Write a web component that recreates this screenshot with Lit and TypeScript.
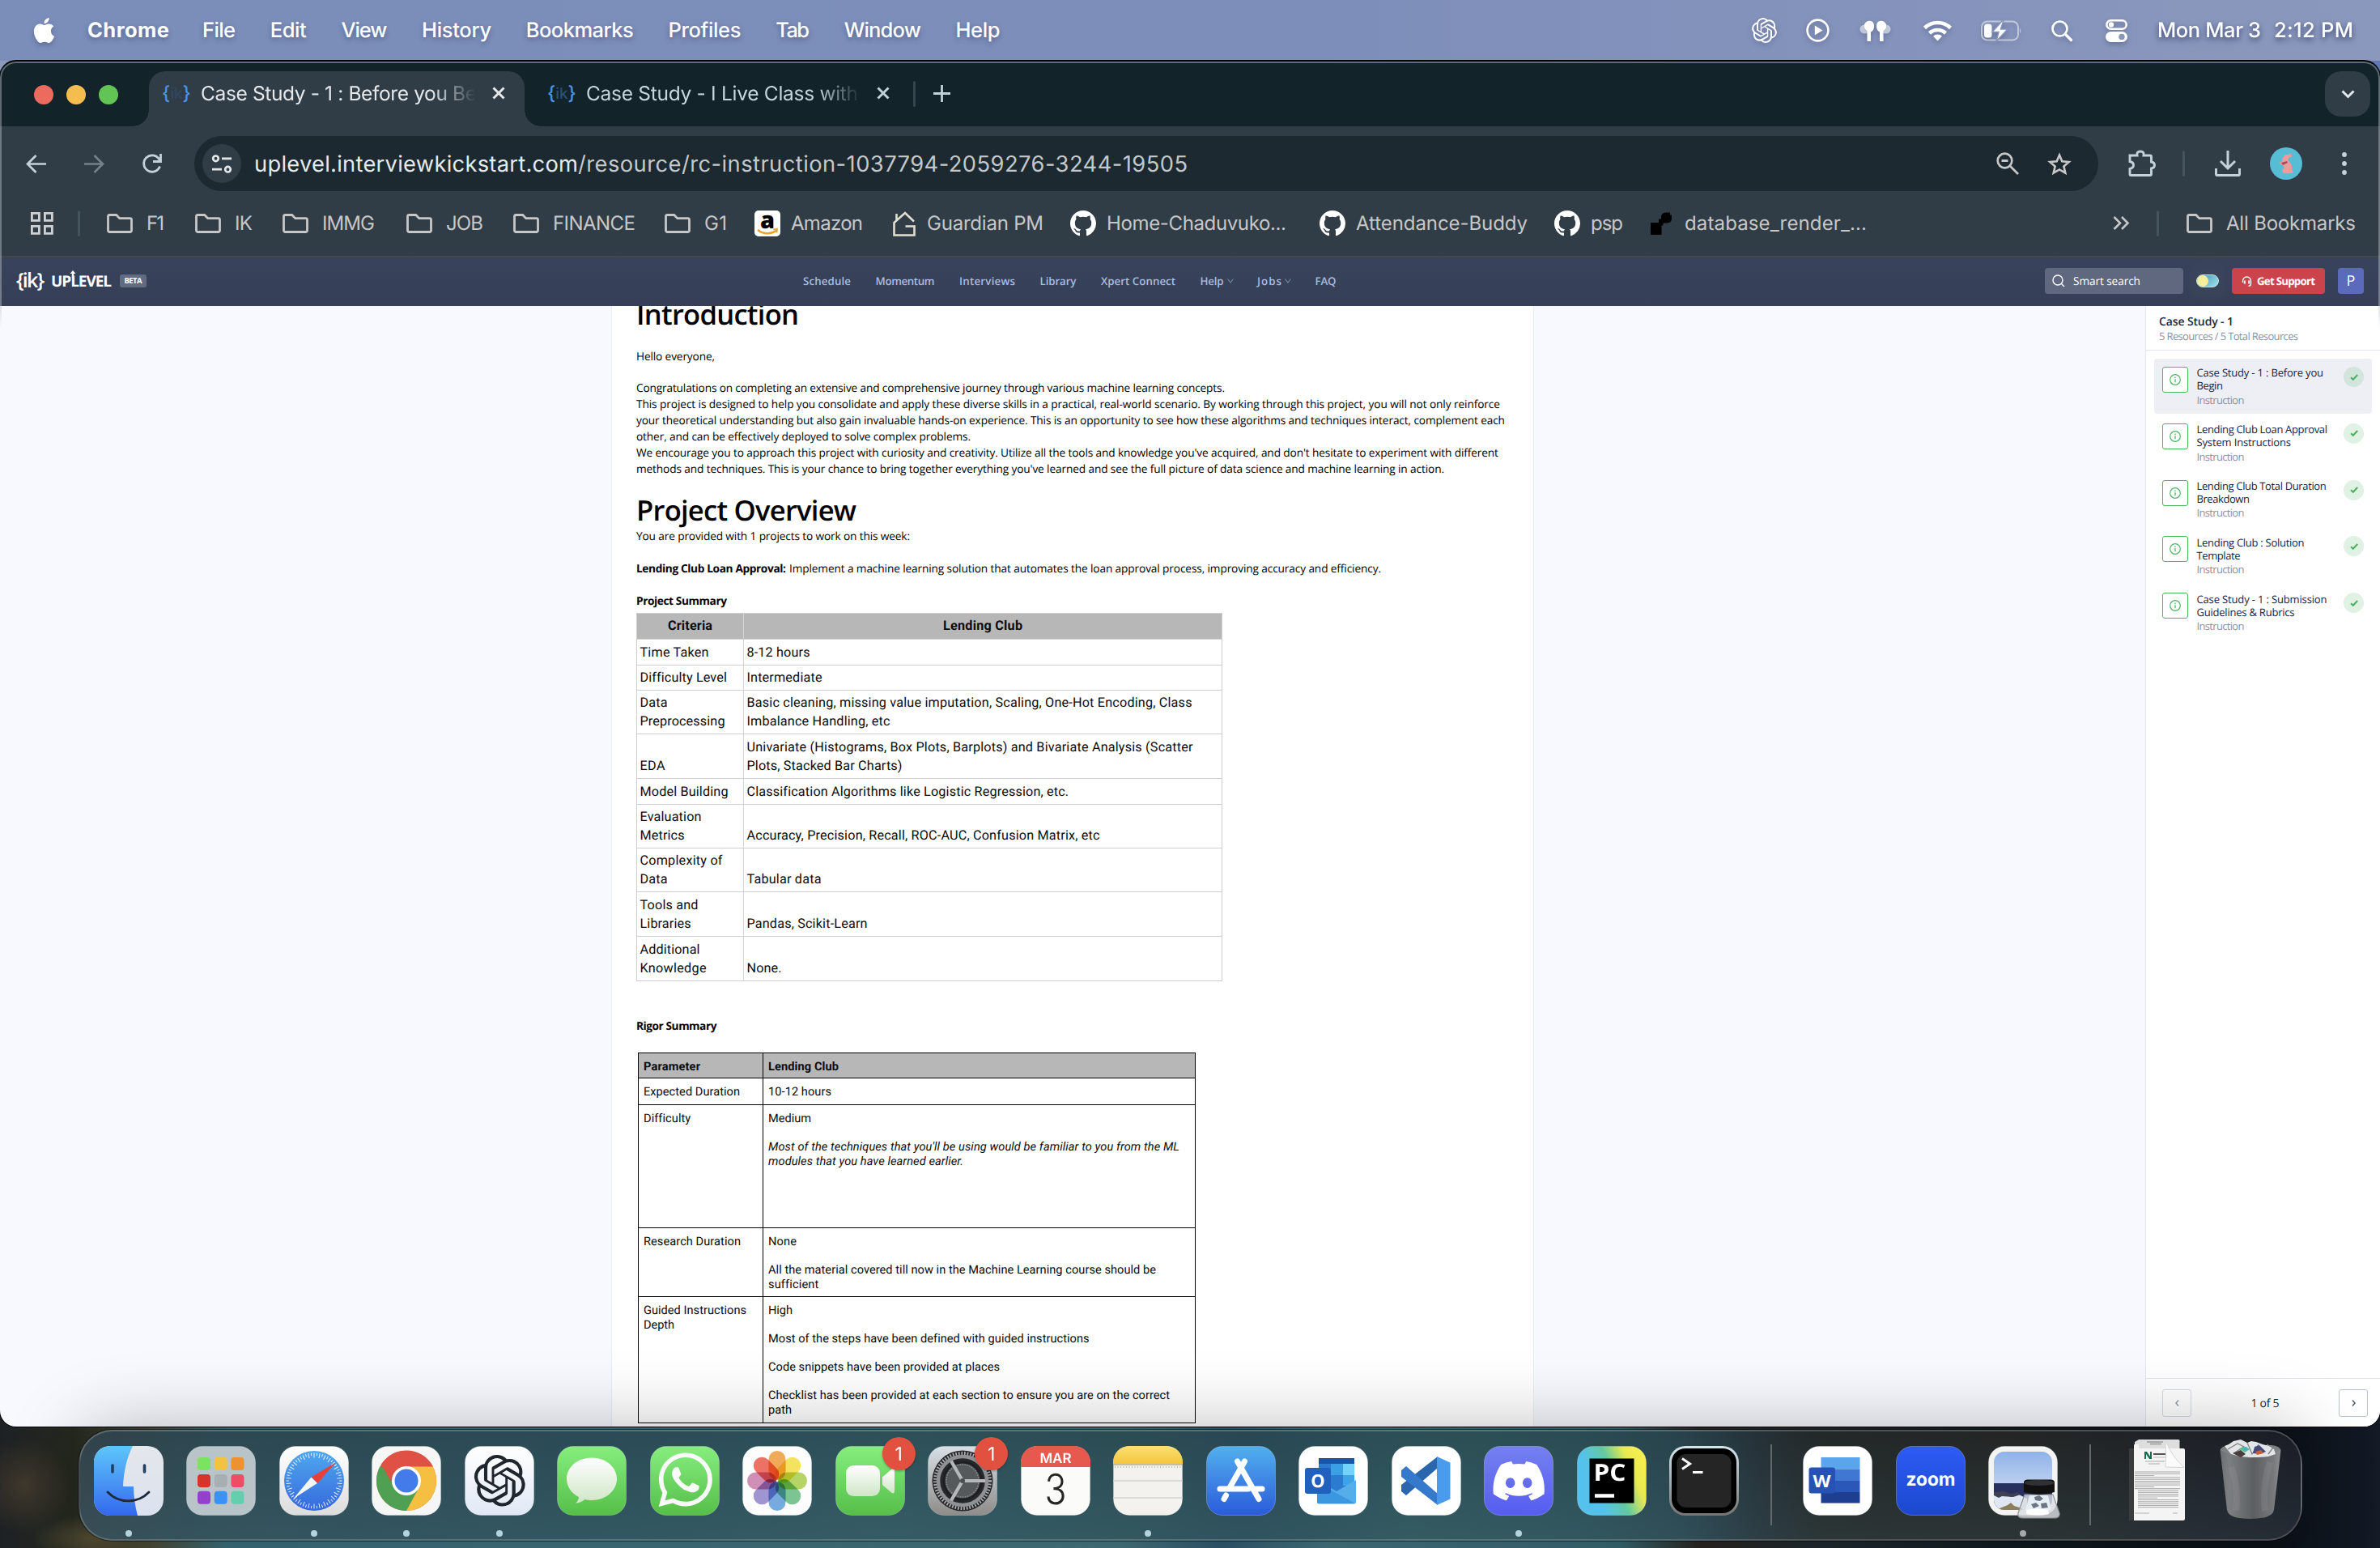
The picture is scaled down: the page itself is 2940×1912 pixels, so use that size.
import { LitElement, html, svg, css, TemplateResult, SVGTemplateResult } from "lit";
import { customElement, property } from "lit/decorators.js";

/** A single line of text whose tracking is adjusted to fill a given width. */
@customElement("fit-text")
class FitText extends LitElement {
  @property() text = "";
  @property({ type: Number }) w = 0;
  static styles = css`
    :host { display: block; white-space: pre; flex: none; }
    .line { display: inline-block; }
  `;
  firstUpdated() {
    const line = this.renderRoot.querySelector(".line") as HTMLElement;
    const natural = line.getBoundingClientRect().width;
    const gaps = Math.max(1, this.text.length - 1);
    line.style.letterSpacing = `${(this.w - natural) / gaps}px`;
    this.style.width = `${this.w}px`;
  }
  render() {
    return html`<span class="line">${this.text}</span>`;
  }
}

const t = (text: string, w: number, cls = "") => html`<fit-text class=${cls} .text=${text} .w=${w}></fit-text>`;
const icon = (w: number, h: number, body: SVGTemplateResult, vb = `0 0 ${w} ${h}`, cls = "") =>
  html`<svg class=${cls} width=${w} height=${h} viewBox=${vb}>${body}</svg>`;

const OPENAI = "M22.2819 9.8211a5.9847 5.9847 0 0 0-.5157-4.9108 6.0462 6.0462 0 0 0-6.5098-2.9A6.0651 6.0651 0 0 0 4.9807 4.1818a5.9847 5.9847 0 0 0-3.9977 2.9 6.0462 6.0462 0 0 0 .7427 7.0966 5.98 5.98 0 0 0 .511 4.9107 6.051 6.051 0 0 0 6.5146 2.9001A5.9847 5.9847 0 0 0 13.2599 24a6.0557 6.0557 0 0 0 5.7718-4.2058 5.9894 5.9894 0 0 0 3.9977-2.9001 6.0557 6.0557 0 0 0-.7475-7.0729zm-9.022 12.6081a4.4755 4.4755 0 0 1-2.8764-1.0408l.1419-.0804 4.7783-2.7582a.7948.7948 0 0 0 .3927-.6813v-6.7369l2.02 1.1686a.071.071 0 0 1 .038.052v5.5826a4.504 4.504 0 0 1-4.4945 4.4944zm-9.6607-4.1254a4.4708 4.4708 0 0 1-.5346-3.0137l.142.0852 4.783 2.7582a.7712.7712 0 0 0 .7806 0l5.8428-3.3685v2.3324a.0804.0804 0 0 1-.0332.0615L9.74 19.9502a4.4992 4.4992 0 0 1-6.1408-1.6464zM2.3408 7.8956a4.485 4.485 0 0 1 2.3655-1.9728V11.6a.7664.7664 0 0 0 .3879.6765l5.8144 3.3543-2.0201 1.1685a.0757.0757 0 0 1-.071 0l-4.8303-2.7865A4.504 4.504 0 0 1 2.3408 7.872zm16.5963 3.8558L13.1038 8.364 15.1192 7.2a.0757.0757 0 0 1 .071 0l4.8303 2.7913a4.4944 4.4944 0 0 1-.6765 8.1042v-5.6772a.79.79 0 0 0-.407-.667zm2.0107-3.0231l-.142-.0852-4.7735-2.7818a.7759.7759 0 0 0-.7854 0L9.409 9.2297V6.8974a.0662.0662 0 0 1 .0284-.0615l4.8303-2.7866a4.4992 4.4992 0 0 1 6.6802 4.66zM8.3065 12.863l-2.02-1.1638a.0804.0804 0 0 1-.038-.0567V6.0742a4.4992 4.4992 0 0 1 7.3757-3.4537l-.142.0805L8.704 5.459a.7948.7948 0 0 0-.3927.6813zm1.0976-2.3654l2.602-1.4998 2.6069 1.4998v2.9994l-2.5974 1.4997-2.6067-1.4997Z";
const APPLE = "M12.152 6.896c-.948 0-2.415-1.078-3.96-1.04-2.04.027-3.91 1.183-4.961 3.014-2.117 3.675-.546 9.103 1.519 12.09 1.013 1.454 2.208 3.09 3.792 3.039 1.52-.065 2.09-.987 3.935-.987 1.831 0 2.35.987 3.96.948 1.637-.026 2.676-1.48 3.676-2.948 1.156-1.688 1.636-3.325 1.662-3.415-.039-.013-3.182-1.221-3.22-4.857-.026-3.04 2.48-4.494 2.597-4.559-1.429-2.09-3.623-2.324-4.39-2.376-2-.156-3.675 1.09-4.61 1.09zM15.53 3.83c.843-1.012 1.4-2.427 1.245-3.83-1.207.052-2.662.805-3.532 1.818-.78.896-1.454 2.338-1.273 3.714 1.338.104 2.715-.688 3.559-1.701";
const DISCORD = "M20.317 4.3698a19.7913 19.7913 0 00-4.8851-1.5152.0741.0741 0 00-.0785.0371c-.211.3753-.4447.8648-.6083 1.2495-1.8447-.2762-3.68-.2762-5.4868 0-.1636-.3933-.4058-.8742-.6177-1.2495a.077.077 0 00-.0785-.037 19.7363 19.7363 0 00-4.8852 1.515.0699.0699 0 00-.0321.0277C.5334 9.0458-.319 13.5799.0992 18.0578a.0824.0824 0 00.0312.0561c2.0528 1.5076 4.0413 2.4228 5.9929 3.0294a.0777.0777 0 00.0842-.0276c.4616-.6304.8731-1.2952 1.226-1.9942a.076.076 0 00-.0416-.1057c-.6528-.2476-1.2743-.5495-1.8722-.8923a.077.077 0 01-.0076-.1277c.1258-.0943.2517-.1923.3718-.2914a.0743.0743 0 01.0776-.0105c3.9278 1.7933 8.18 1.7933 12.0614 0a.0739.0739 0 01.0785.0095c.1202.099.246.1981.3728.2924a.077.077 0 01-.0066.1276 12.2986 12.2986 0 01-1.873.8914.0766.0766 0 00-.0407.1067c.3604.698.7719 1.3628 1.225 1.9932a.076.076 0 00.0842.0286c1.961-.6067 3.9495-1.5219 6.0023-3.0294a.077.077 0 00.0313-.0552c.5004-5.177-.8382-9.6739-3.5485-13.6604a.061.061 0 00-.0312-.0286zM8.02 15.3312c-1.1825 0-2.1569-1.0857-2.1569-2.419 0-1.3332.9555-2.4189 2.157-2.4189 1.2108 0 2.1757 1.0952 2.1568 2.419 0 1.3332-.9555 2.4189-2.1569 2.4189zm7.9748 0c-1.1825 0-2.1569-1.0857-2.1569-2.419 0-1.3332.9554-2.4189 2.1569-2.4189 1.2108 0 2.1757 1.0952 2.1568 2.419 0 1.3332-.946 2.4189-2.1568 2.4189Z";
const WHATSAPP = "M17.472 14.382c-.297-.149-1.758-.867-2.03-.967-.273-.099-.471-.148-.67.15-.197.297-.767.966-.94 1.164-.173.199-.347.223-.644.075-.297-.15-1.255-.463-2.39-1.475-.883-.788-1.48-1.761-1.653-2.059-.173-.297-.018-.458.13-.606.134-.133.298-.347.446-.52.149-.174.198-.298.298-.497.099-.198.05-.371-.025-.52-.075-.149-.669-1.612-.916-2.207-.242-.579-.487-.5-.669-.51-.173-.008-.371-.01-.57-.01-.198 0-.52.074-.792.372-.272.297-1.04 1.016-1.04 2.479 0 1.462 1.065 2.875 1.213 3.074.149.198 2.096 3.2 5.077 4.487.709.306 1.262.489 1.694.625.712.227 1.36.195 1.871.118.571-.085 1.758-.719 2.006-1.413.248-.694.248-1.289.173-1.413-.074-.124-.272-.198-.57-.347m-5.421 7.403h-.004a9.87 9.87 0 01-5.031-1.378l-.361-.214-3.741.982.998-3.648-.235-.374a9.86 9.86 0 01-1.51-5.26c.001-5.45 4.436-9.884 9.888-9.884 2.64 0 5.122 1.03 6.988 2.898a9.825 9.825 0 012.893 6.994c-.003 5.45-4.437 9.884-9.885 9.884m8.413-18.297A11.815 11.815 0 0012.05 0C5.495 0 .16 5.335.157 11.892c0 2.096.547 4.142 1.588 5.945L.057 24l6.305-1.654a11.882 11.882 0 005.683 1.448h.005c6.554 0 11.89-5.335 11.893-11.893a11.821 11.821 0 00-3.48-8.413z";
const GITHUB = "M8 0C3.58 0 0 3.58 0 8c0 3.54 2.29 6.53 5.47 7.59.4.07.55-.17.55-.38 0-.19-.01-.82-.01-1.49-2.01.37-2.53-.49-2.69-.94-.09-.23-.48-.94-.82-1.13-.28-.15-.68-.52-.01-.53.63-.01 1.08.58 1.23.82.72 1.21 1.87.87 2.33.66.07-.52.28-.87.51-1.07-1.78-.2-3.64-.89-3.64-3.95 0-.87.31-1.59.82-2.15-.08-.2-.36-1.02.08-2.12 0 0 .67-.21 2.2.82.64-.18 1.32-.27 2-.27s1.36.09 2 .27c1.53-1.04 2.2-.82 2.2-.82.44 1.1.16 1.92.08 2.12.51.56.82 1.27.82 2.15 0 3.07-1.87 3.75-3.65 3.95.29.25.54.73.54 1.48 0 1.07-.01 1.93-.01 2.2 0 .21.15.46.55.38A8.01 8.01 0 0 0 16 8c0-4.42-3.58-8-8-8z";

/* ---------- small icons ---------- */
const folder = icon(32, 24, svg`<path d="M1.5 3.2a1.8 1.8 0 0 1 1.8-1.7h8.4l4 4.2h13a1.8 1.8 0 0 1 1.8 1.8v13.2a1.8 1.8 0 0 1-1.8 1.8H3.300a1.8 1.8 0 0 1-1.8-1.800z" fill="none" stroke="#c7c7c7" stroke-width="2.8"/>`);
const github = icon(32, 32, svg`<path d=${GITHUB} fill="#fff"/>`, "0 0 16 16");
const amazon = icon(32, 32, svg`<rect width="32" height="32" rx="5" fill="#fff"/><text x="16" y="22" text-anchor="middle" font-family="Open Sans" font-weight="800" font-size="29" fill="#000">a</text><path d="M4 24c7 5.500 17 5.500 23 .6" fill="none" stroke="#f29f33" stroke-width="2.600"/><path d="M23.500 23.300l4.500-.6-.6 4.600" fill="none" stroke="#f29f33" stroke-width="1.800"/>`);
const guardian = icon(30, 32, svg`<path d="M27 13.500L16 3 2.500 15v15.500h25V19.500H16.500M5.500 12V4" fill="none" stroke="#e3dfcf" stroke-width="2.600"/>`);
const render = icon(32, 30, svg`<path d="M3 14h10v-4.500h3V6q1-4 5-4.500h6v3h2V10q-1 4-5 4.500h-5.500v3H16.500V29H3z" fill="#000"/>`);
const closeX = (c: string) => icon(16, 16, svg`<path d="M1.500 1.500l13 13M14.500 1.500l-13 13" stroke=${c} stroke-width="3" fill="none"/>`);

const menus: [string, number][] = [["File", 41], ["Edit", 45], ["View", 57], ["History", 86], ["Bookmarks", 133], ["Profiles", 90], ["Tab", 42], ["Window", 95], ["Help", 55]];

const bookmarks: [TemplateResult, string, number][] = [
  [folder, "F1", 22], [folder, "IK", 22], [folder, "IMMG", 65], [folder, "JOB", 46], [folder, "FINANCE", 102], [folder, "G1", 28],
  [amazon, "Amazon", 89], [guardian, "Guardian PM", 144], [github, "Home-Chaduvuko...", 222], [github, "Attendance-Buddy", 212], [github, "psp", 40], [render, "database_render_...", 225],
];

const navLinks: [string, number, boolean][] = [["Schedule", 59, false], ["Momentum", 73, false], ["Interviews", 69, false], ["Library", 45, false], ["Xpert Connect", 92, false], ["Help", 29, true], ["Jobs", 30, true], ["FAQ", 26, false]];

type Line = [string, number];
const project: [number, Line[], Line[]][] = [
  [33, [["Criteria", 55]], [["Lending Club", 98]]],
  [32, [["Time Taken", 85]], [["8-12 hours", 78]]],
  [31, [["Difficulty Level", 106]], [["Intermediate", 93]]],
  [54.5, [["Data", 34], ["Preprocessing", 105]], [["Basic cleaning, missing value imputation, Scaling, One-Hot Encoding, Class", 550], ["Imbalance Handling, etc", 177]]],
  [54.8, [["EDA", 31]], [["Univariate (Histograms, Box Plots, Barplots) and Bivariate Analysis (Scatter", 551], ["Plots, Stacked Bar Charts)", 192]]],
  [32.2, [["Model Building", 109]], [["Classification Algorithms like Logistic Regression, etc.", 397]]],
  [53.8, [["Evaluation", 76], ["Metrics", 55]], [["Accuracy, Precision, Recall, ROC-AUC, Confusion Matrix, etc", 436]]],
  [54.6, [["Complexity of", 102], ["Data", 34]], [["Tabular data", 92]]],
  [54.6, [["Tools and", 72], ["Libraries", 63]], [["Pandas, Scikit-Learn", 149]]],
  [55, [["Additional", 74], ["Knowledge", 82]], [["None.", 43]]],
];
const rigor: [number, Line[], Line[][], string][] = [
  [32, [["Parameter", 70]], [[["Lending Club", 87]]], "head"],
  [33, [["Expected Duration", 119]], [[["10-12 hours", 78]]], ""],
  [152, [["Difficulty", 57]], [[["Medium", 53]], [["Most of the techniques that you'll be using would be familiar to you from the ML", 508], ["modules that you have learned earlier.", 241]]], "ital"],
  [85.3, [["Research Duration", 120]], [[["None", 35]], [["All the material covered till now in the Machine Learning course should be", 479], ["sufficient", 61]]], ""],
  [156, [["Guided Instructions", 127], ["Depth", 38]], [[["High", 30]], [["Most of the steps have been defined with guided instructions", 396]], [["Code snippets have been provided at places", 286]], [["Checklist has been provided at each section to ensure you are on the correct", 496], ["path", 29]]], ""],
];
const resources: [Line, Line][] = [
  [["Case Study - 1 : Before you", 156.500], ["Begin", 32.500]],
  [["Lending Club Loan Approval", 161.500], ["System Instructions", 116.500]],
  [["Lending Club Total Duration", 160.300], ["Breakdown", 65.500]],
  [["Lending Club : Solution", 133], ["Template", 54]],
  [["Case Study - 1 : Submission", 161], ["Guidelines & Rubrics", 121]],
];

/* ---------- dock icons, drawn on an 86-unit tile ---------- */
const bg = (fill: string) => svg`<rect x=".5" y=".5" width="85" height="85" rx="19.500" fill=${fill} stroke="#fff" stroke-opacity=".25"/>`;
const range = (n: number) => Array.from({ length: n }, (_, i) => i);

const finder = svg`<clipPath id="fc"><rect width="86" height="86" rx="20"/></clipPath><g clip-path="url(#fc)"><rect width="86" height="86" fill="url(#gFinR)"/><path d="M0 0H48C40 16 37 32 36 49q0 1 1 1H49C49 62 51 75 54 86H0z" fill="url(#gFinL)"/></g>
<path d="M23 24v8M62.500 24v8" stroke="#24405f" stroke-width="3.600" stroke-linecap="round"/><path d="M17 57c14 14.500 37 14.500 51 0" fill="none" stroke="#1d2a3c" stroke-width="2.800" stroke-linecap="round"/>`;
const padColors = ["#7be35f", "#f3c243", "#ee9131", "#d5342b", "#a8afb3", "#ee4d66", "#9440cf", "#3a92f5", "#62cfae"];
const launchpad = svg`${bg("#b9c4c8")}${padColors.map((c, i) => svg`<rect x=${14 + (i % 3) * 20.7} y=${14 + Math.floor(i / 3) * 20.9} width="16" height="16" rx="4" fill=${c}/>`)}`;
const safari = svg`${bg("url(#gWhite)")}<circle cx="43" cy="43" r="37" fill="url(#gSaf)"/>${range(60).map((i) => svg`<path d=${i % 2 ? "M43 8.500v3.500" : "M43 8.500v6"} stroke="#fff" stroke-opacity=".85" stroke-width="1" transform="rotate(${i * 6} 43 43)"/>`)}
<path d="M69.500 20.500L39.500 38.500 47 46z" fill="#ea3f36"/><path d="M17.500 65L39.500 38.500 47 46z" fill="#f4f5f7"/>`;
const chrome = svg`${bg("#f6f6f6")}<circle cx="43" cy="43" r="37" fill="#de5144"/><path d="M43 43L10.950 24.500A37 37 0 0 0 43 80z" fill="#4fa053"/><path d="M43 80A37 37 0 0 0 75.040 24.500H43V43z" fill="#f5bf41"/><path d="M27.800 51.800L10.950 24.500 43 25.500z" fill="#de5144"/><path d="M43 80L58.500 51.500 43 45 28 52 27 51.500 43 80z" fill="#4fa053"/><path d="M11 24.500L28 52l5-10z" fill="#4fa053"/><path d="M12 22.500L27.500 50 43 30V25.500H76A37 37 0 0 0 12 22.500z" fill="#de5144"/><circle cx="43" cy="43" r="18" fill="#fff"/><circle cx="43" cy="43" r="14.500" fill="#447bea"/>`;
const chatgpt = svg`${bg("url(#gGpt)")}<path d=${OPENAI} fill="#1f262d" transform="translate(11.500 11) scale(2.650)"/>`;
const messages = svg`${bg("url(#gGreen)")}<path d="M43 14.500c17.500 0 31 11.500 31 26s-13.500 26.500-31 26.500c-3 0-6-.3-8.500-1-3 2.700-7 4.500-11.500 4.500 2.500-2 4-4.700 4-7.500C18 58.500 12 50 12 40.500c0-14.500 13.500-26 31-26z" fill="url(#gBub)"/>`;
const whatsapp = svg`${bg("url(#gGreen)")}<path d=${WHATSAPP} fill="#fafafa" transform="translate(10.500 8.500) scale(2.770)"/>`;
const petals = ["#f09a37", "#f4df3c", "#a9cd45", "#62b97c", "#5a9bdb", "#8d7fc9", "#c877a8", "#ea5445"];
const photos = svg`${bg("#fdfdfd")}${petals.map((c, i) => svg`<rect x="32.500" y="6" width="21" height="36" rx="10.500" fill=${c} fill-opacity=".82" class="petal" transform="rotate(${i * 45} 43 43)"/>`)}`;
const facetime = svg`${bg("url(#gGreen)")}<rect x="13" y="24" width="42" height="38" rx="9.500" fill="url(#gBub)"/><path d="M58 38.500L69 29q4-3 4 1.500V56q0 4-4 1.500L58 48z" fill="url(#gBub)"/>`;
const settings = svg`${bg("url(#gSet)")}<circle cx="43" cy="43" r="37.500" fill="#26282a"/><circle cx="43" cy="43" r="34" fill="none" stroke="#a9adaf" stroke-width="4" stroke-dasharray="1.700 1.900"/><circle cx="43" cy="43" r="30" fill="none" stroke="#8e9294" stroke-width="4.500"/><circle cx="43" cy="43" r="23" fill="#55595b" stroke="#1d1f20" stroke-width="3"/><circle cx="43" cy="43" r="20" fill="none" stroke="#888c8e" stroke-width="1.500" stroke-dasharray="1.500 1.500"/><path d="M43 43H71M43 43L29 18.800M43 43L29 67.200" stroke="#b4b8ba" stroke-width="4.200"/><circle cx="43" cy="43" r="3" fill="#4a4e50"/>`;
const calendar = svg`${bg("#fbfbf9")}<path d="M0 26V20A20 20 0 0 1 20 0H66A20 20 0 0 1 86 20V26z" fill="#e5594f"/><text x="43" y="20.500" text-anchor="middle" font-family="Inter" font-weight="600" font-size="17" fill="#fff">MAR</text><text x="43" y="72" text-anchor="middle" font-family="Inter" font-weight="300" font-size="52" fill="#262626" textLength="27" lengthAdjust="spacingAndGlyphs">3</text>`;
const notes = svg`${bg("#f4f2ee")}<path d="M0 22V20A20 20 0 0 1 20 0H66A20 20 0 0 1 86 20V22z" fill="url(#gNote)"/><path d="M0 23H86" stroke="#b9ac86" stroke-width="1.500"/><path d="M2 26H85" stroke="#c4c1bb" stroke-width="2" stroke-dasharray="1 2.500"/><path d="M0 43H86M0 64H86" stroke="#d5d3d0" stroke-width="1.400"/>`;
const appstore = svg`${bg("url(#gApp)")}<g stroke="#fff" stroke-width="7" stroke-linecap="round"><path d="M47.500 19L29 51.500M38.500 19L65 65.500M17 53H52M61 53H69M24.500 61L22 65.500"/></g>`;
const outlook = svg`${bg("#fff")}<rect x="25" y="15" width="44" height="56" rx="2.500" fill="#2b7cd0"/><rect x="25" y="15" width="44" height="7" fill="#1c55a3"/><rect x="40" y="22" width="15" height="14" fill="#3a9fe3"/><rect x="55" y="22" width="14" height="14" fill="#74d3fa"/><rect x="55" y="36" width="14" height="13" fill="#3fa3e8"/><path d="M23 42L47 56 71 42V69a2.500 2.500 0 0 1-2.500 2.500H25.500A2.500 2.500 0 0 1 23 69z" fill="#55aeea"/><path d="M23 45L70 71H25a2 2 0 0 1-2-2z" fill="#3b97e0"/><rect x="8" y="27" width="32" height="32" rx="3" fill="#2260bd"/><text x="24" y="50.500" text-anchor="middle" font-family="Open Sans" font-weight="700" font-size="22" fill="#fff">O</text>`;
const vscode = svg`${bg("#fff")}<path d="M12 56l6 5L57 27V13L12 48z" fill="#2a66ad"/><path d="M12 30l6-5L57 59V73L12 38z" fill="#3579cc"/><path d="M56 13l16.500 7.500V65.500L56 73z" fill="#4b9bec"/>`;
const discord = svg`${bg("url(#gDis)")}<path d=${DISCORD} fill="#fff" transform="translate(11.500 11.500) scale(2.640)"/>`;
const pycharm = svg`${bg("url(#gPy)")}<rect x="15.500" y="15.500" width="55" height="55" fill="#000"/><text x="20.500" y="43" font-family="Open Sans" font-weight="700" font-size="29" fill="#fff" textLength="40" lengthAdjust="spacingAndGlyphs">PC</text><path d="M22 61.500H46" stroke="#fff" stroke-width="4.500"/>`;
const terminal = svg`<rect width="86" height="86" rx="20" fill="url(#gTerm)"/><rect x="3" y="3" width="80" height="80" rx="17" fill="#000"/><rect x="9.500" y="10" width="67" height="66" rx="11" fill="#252525"/><path d="M16 15.500l9.500 6.500-9.500 6.500" fill="none" stroke="#fff" stroke-width="3"/><path d="M29 32.500H41.500" stroke="#fff" stroke-width="3"/>`;
const word = svg`${bg("#fff")}<g><rect x="22.500" y="14" width="48" height="14.500" fill="#5ba5ec"/><rect x="22.500" y="28.500" width="48" height="14.500" fill="#3f77d2"/><rect x="22.500" y="43" width="48" height="14" fill="#2b58b8"/><rect x="22.500" y="57" width="48" height="13.500" fill="#1e3f8f"/></g><rect x="7.500" y="26.500" width="32.500" height="32" rx="3" fill="#2552b3"/><text x="23.500" y="50.500" text-anchor="middle" font-family="Open Sans" font-weight="700" font-size="21" fill="#fff" textLength="22" lengthAdjust="spacingAndGlyphs">W</text>`;
const zoom = svg`${bg("url(#gZoom)")}<text x="43" y="49" text-anchor="middle" font-family="Inter" font-weight="700" font-size="23" fill="#fff" textLength="61" lengthAdjust="spacingAndGlyphs">zoom</text>`;
const preview = svg`${bg("#f3f3f3")}<clipPath id="pc"><rect x="7" y="7" width="72" height="72" rx="13"/></clipPath><g clip-path="url(#pc)"><rect x="7" y="7" width="72" height="40" fill="url(#gSky)"/><rect x="7" y="46" width="72" height="34" fill="#27305f"/><path d="M7 57l12 1 9 5 10-3 10 5v15H7z" fill="#dfe8f2"/><path d="M7 57l12-1 9 3 9-2 3 3-9 3-14-1-4 2-6-3z" fill="#3f4152"/><path d="M14 77l10-4 4-3 4 4 10 3v4H14z" fill="#8b7f5e"/></g>
<path d="M45 60L37 83q-1 6 6 6H81q8 0 7-6L80 60z" fill="#d9dde2" fill-opacity=".82" stroke="#8c9298" stroke-width="1.200"/><path d="M51 61h23l4 18H46z" fill="#e6eef5"/><path d="M57 63l6-2 5 4-4 3-6-1zM53 72l6-2 4 4-7 3zM65 71l7-1 2 6-8 1z" fill="#6c7581"/><path d="M47 79q15-3 27 0l1 5q-14 3-28 0z" fill="#fff"/><path d="M44 45q0-3.500 5-3.500H77q5 0 5 3.500V57q-19 6-38 0z" fill="#111"/><ellipse cx="63" cy="45.500" rx="18.500" ry="3.500" fill="#303133"/>`;
const dock: [SVGTemplateResult, boolean, boolean][] = [
  [finder, true, false], [launchpad, false, false], [safari, true, false], [chrome, true, false], [chatgpt, true, false], [messages, false, false],
  [whatsapp, false, false], [photos, false, false], [facetime, false, true], [settings, false, true], [calendar, false, false], [notes, true, false],
  [appstore, false, false], [outlook, false, false], [vscode, false, false], [discord, true, false], [pycharm, false, false], [terminal, false, false],
];
const dock2: [SVGTemplateResult, boolean, boolean][] = [[word, false, false], [zoom, false, false], [preview, true, false]];

const grad = (id: string, a: string, b: string, x2 = 0, y2 = 1) =>
  svg`<linearGradient id=${id} x1="0" y1="0" x2=${x2} y2=${y2}><stop offset="0" stop-color=${a}/><stop offset="1" stop-color=${b}/></linearGradient>`;

@customElement("app-root")
class AppRoot extends LitElement {
  static styles = css`
    :host { display: block; width: 2940px; height: 1912px; overflow: hidden; font-family: Inter, "Liberation Sans", sans-serif; text-rendering: geometricPrecision; }
    * { box-sizing: border-box; }
    svg { display: block; flex: none; overflow: visible; }
    .petal { mix-blend-mode: multiply; }
    .screen { display: flex; flex-direction: column; width: 2940px; height: 1912px; background: #0a0f12; }
    .defs { position: absolute; width: 0; height: 0; }

    .menubar { height: 75px; flex: none; display: flex; align-items: center; background: linear-gradient(90deg, #7b8db9, #7d8eba 55%, #8b98bd); color: #fff; font-size: 25.500px; font-weight: 500; padding: 0 33px 0 39px; line-height: 75px; text-shadow: 0 3px 6px rgba(30,40,80,.4); }
    .menubar .glyph { filter: drop-shadow(0 3px 3px rgba(30,40,80,.3)); }
    .app { font-weight: 700; margin: 0 41px 0 38px; }
    .menus { display: flex; gap: 42.700px; flex: 1; }
    .status { display: flex; align-items: center; }
    .clock { display: flex; gap: 16px; margin-left: 37px; }
    .s1 { margin-right: 36px; } .s2 { margin-right: 37px; } .s3 { margin-right: 40px; } .s4 { margin-right: 36px; } .s5 { margin-right: 37px; } .s6 { margin-right: 41px; }

    .desk { flex: 1; display: flex; flex-direction: column; background:
      linear-gradient(90deg, #8e99bd, #5f78b4) top / 100% 30px no-repeat,
      radial-gradient(ellipse 60px 60px at 30px 1760px, #40382c, transparent),
      radial-gradient(ellipse 80px 30px at 120px 1825px, #544d33, transparent),
      linear-gradient(90deg, #1d2124 0, #26291f 90px, #4a4c3a 190px, #3b6f7c 280px, #467680 1380px, #315a70 1510px, #447580 1640px, #3c6a78 1900px, #386872 2000px, #2b2622 2100px, #1f2a30 2250px, #0f1a20 2500px, #0a1016 2800px, #141a26 2940px); }

    .window { height: 1687px; flex: none; display: flex; flex-direction: column; border-radius: 20px; overflow: hidden; background: #303c46; border-top: 1px solid #05090b; box-shadow: 0 0 0 1px #000; position: relative; }
    .rim { position: absolute; inset: 0; border-radius: 20px; border: 2px solid rgba(190,196,205,.45); border-bottom: none; pointer-events: none; -webkit-mask-image: linear-gradient(#000 300px, transparent 330px); mask-image: linear-gradient(#000 300px, transparent 330px); }

    .tabs { height: 80px; flex: none; background: #12232a; display: flex; padding: 12px 12px 0 42px; font-size: 24.500px; }
    .lights { display: flex; gap: 16px; padding-top: 17px; width: 142px; flex: none; }
    .lights i { width: 24px; height: 24px; border-radius: 50%; }
    .red { background: #ed6a5f; } .yel { background: #f5bd4f; } .grn { background: #61c454; }
    .tab { display: flex; align-items: center; height: 68px; padding-bottom: 14px; position: relative; color: #c7d6dd; }
    .tab.active { width: 464px; background: #303c46; border-radius: 20px 20px 0 0; color: #e5e8ea; padding-left: 16px; }
    .tab.active::before, .tab.active::after { content: ""; position: absolute; bottom: 0; width: 20px; height: 20px; }
    .tab.active::before { left: -20px; background: radial-gradient(circle at 0 0, transparent 19.500px, #303c46 20px); }
    .tab.active::after { right: -20px; background: radial-gradient(circle at 100% 0, transparent 19.500px, #303c46 20px); }
    .fav { width: 32px; color: #2c5078; font-size: 19px; display: flex; justify-content: space-between; align-items: center; font-weight: 500; }
    .active .fav { color: #35475f; }
    .fav b { color: #4a93e6; font-weight: 500; font-size: 23px; }
    .title { margin-left: 16px; width: 344px; overflow: hidden; -webkit-mask-image: linear-gradient(90deg, #000 285px, transparent 340px); mask-image: linear-gradient(90deg, #000 285px, transparent 340px); }
    .second { padding-left: 28px; }
    .second .title { width: 340px; }
    .active .title { margin-right: 16px; }
    .second .title { margin-right: 19px; }
    .tsep { width: 3px; height: 32px; background: #34454e; border-radius: 2px; margin: 12px 22px 0 29px; }
    .plus { margin-top: 17px; }
    .grow { flex: 1; }
    .tabsearch { width: 56px; height: 56px; border-radius: 20px; background: #303c46; display: grid; place-items: center; }

    .toolbar { height: 80px; flex: none; display: flex; align-items: center; padding: 12px 42px 0 32px; }
    .toolbar .back { margin-right: 47px; } .toolbar .fwd { margin-right: 47px; } .toolbar .rel { margin-right: 40px; }
    .omni { width: 2352px; height: 68px; border-radius: 34px; background: #1c2930; display: flex; align-items: center; padding: 0 33px 0 10px; font-size: 27.300px; flex: none; color: #c4c8ca; }
    .site { width: 48px; height: 48px; border-radius: 24px; background: #303c46; display: grid; place-items: center; margin-right: 16px; }
    .host { color: #e7eaec; }
    .omni .zo { margin-right: 35px; }
    .puz { margin: 0 34px 0 37px; }
    .vsep { width: 3px; height: 32px; background: #45535d; border-radius: 2px; flex: none; }
    .dl { margin: 0 36px 0 37px; }
    .av { margin-right: 49px; }

    .bookmarks { height: 80px; flex: none; display: flex; align-items: center; padding: 0 30px 1px 38px; font-size: 24px; color: #c7c7c7; }
    .bookmarks .vsep { margin: 0 33px 0 30px; }
    .bookmarks .vs2 { margin-left: 33px; margin-right: 34px; }
    .bmgrid { display: grid; grid-template-columns: 109px 108px 153px 132px 187px 111px 170px 220px 308px 290px 116px 1fr; flex: 1; }
    .bm { display: flex; align-items: center; gap: 13px; }
    .bm.f { gap: 17px; }
    .line2 { height: 2px; background: #41474c; flex: none; }

    .nav { height: 60px; flex: none; background: linear-gradient(#37425c, #363f56); display: flex; align-items: center; padding: 0 20px 2px; font-family: "Open Sans", sans-serif; font-size: 13.300px; font-weight: 600; color: #a9bcdf; }
    .logo { font-size: 25px; color: #fff; font-weight: 600; line-height: 28px; padding-bottom: 3px; }
    .upwrap { position: relative; margin: 0 10px 0 8px; }
    .uplevel { font-size: 19px; font-weight: 700; color: #fff; }
    .arrow { position: absolute; left: 23px; top: 0; }
    .beta { background: #626b80; color: #fff; font-size: 9.500px; font-weight: 700; border-radius: 3px; width: 33px; height: 16px; display: grid; place-items: center; line-height: 16px; }
    .links { display: flex; gap: 30.500px; margin-left: 811px; flex: 1; }
    .link { display: flex; align-items: center; gap: 4px; }
    .link.drop { margin-right: -1px; }
    .search { width: 171px; height: 32px; border-radius: 4px; background: #5f687f; display: flex; align-items: center; gap: 10px; padding-left: 9px; color: #fff; font-weight: 500; font-size: 13.700px; }
    .toggle { margin: 0 16px; width: 28px; height: 16px; border-radius: 8px; background: linear-gradient(135deg, #3f8cad, #9fe3ef); border: 1px solid #bfe6ea; box-shadow: 0 0 30px rgba(240,230,140,.14); }
    .toggle i { display: block; width: 14px; height: 14px; border-radius: 7px; background: #f7ee9b; }
    .support { width: 115px; height: 32px; border-radius: 4px; background: #cc444b; color: #fff; display: flex; align-items: center; gap: 6px; padding-left: 12px; font-weight: 700; }
    .user { width: 32px; height: 32px; border-radius: 4px; background: #5c6abc; color: #fff; margin-left: 16px; display: grid; place-items: center; font-size: 18px; font-weight: 400; }

    .body { height: 1384px; flex: none; display: flex; background: #f8f9fe; overflow: hidden; font-family: "Open Sans", sans-serif; }
    .canvas { width: 2650px; display: flex; justify-content: center; }
    .doc { width: 1140px; height: 1384px; background: #fff; border: solid #eaecf5; border-width: 0 1px; padding-left: 30px; overflow: hidden; font-size: 13.700px; line-height: 19.830px; color: #000; }
    .doc h1 { margin: 0; font-size: 34.600px; font-weight: 600; line-height: 44px; color: #000; }
    .doc .intro { margin-top: -11.500px; }
    .blank { height: 19.830px; }
    .p1 { padding-top: 20.300px; padding-bottom: 20px; }
    .bold { font-weight: 700; }
    .mix { display: flex; gap: 4px; }
    .t1 { width: 724px; margin-top: 4px; border: 1px solid #cfcfcf; border-bottom: none; font-family: Roboto, sans-serif; font-size: 16.200px; line-height: 23px; color: #0c0c0c; }
    .t1 .row { display: flex; border-bottom: 1px solid #cfcfcf; }
    .t1 .row > div { display: flex; flex-direction: column; justify-content: flex-end; padding: 0 3.500px 4px; }
    .t1 .c1 { width: 132px; border-right: 1px solid #d3d3d3; }
    .t1 .row.head { background: #b7b7b7; font-weight: 700; }
    .t1 .head > div { align-items: center; padding-bottom: 5px; }
    .t1 .c2 { flex: 1; }
    .rig { padding-top: 46px; padding-bottom: 22px; }
    .t2 { width: 689px; margin-left: 2px; border: 1px solid #000; border-bottom: none; font-family: Roboto, sans-serif; font-size: 14.600px; line-height: 18px; color: #0c0c0c; }
    .t2 .row { display: flex; border-bottom: 1px solid #000; }
    .t2 .row > div { padding: 7.300px 6px 0; display: flex; flex-direction: column; gap: 16.900px; }
    .t2 .c1 { width: 154px; border-right: 1px solid #000; }
    .t2 .c1 > div, .t2 .c2 > div { flex: none; }
    .t2 .head { background: #b7b7b7; font-weight: 700; }
    .t2 .ital .c2 > div + div { font-style: italic; }

    .side { width: 290px; background: #fff; border-left: 1px solid #e2e4ef; display: flex; flex-direction: column; }
    .shead { height: 55px; border-bottom: 1px solid #e2e4ef; padding: 11px 0 0 16px; flex: none; }
    .st { font-size: 14px; font-weight: 600; line-height: 18px; color: #1b2840; }
    .ss { font-size: 13px; line-height: 17px; color: #8a94a6; }
    .list { padding: 10px; flex: 1; display: flex; flex-direction: column; gap: 1.800px; }
    .res { height: 68px; border-radius: 4px; display: flex; padding: 10px; }
    .res.on { background: #eeeff5; }
    .rbox { width: 32px; height: 32px; border: 1px solid #4fb662; border-radius: 3px; background: #fff; display: grid; place-items: center; margin-right: 10.500px; }
    .rt { flex: 1; font-size: 13px; line-height: 16px; color: #132244; font-weight: 500; margin-top: -.7px; }
    .rt .ins { color: #8893a5; padding-top: 1.500px; font-weight: 400; }
    .ok { width: 25px; height: 25px; border-radius: 50%; background: #dff2e4; display: grid; place-items: center; }
    .on .ok { background: #d1e5dc; }
    .pager { height: 60px; border-top: 1px solid #e0e2ee; display: flex; align-items: center; justify-content: space-between; padding: 1px 15px 0 20px; font-size: 14px; font-weight: 500; color: #1b2840; }
    .pb { width: 36px; height: 34px; border: 1px solid #b7c3d6; border-radius: 3px; display: grid; place-items: center; }
    .pb.off { border-color: #d5dae6; }

    .dockarea { height: 150px; flex: none; display: flex; justify-content: center; padding-top: 4px; }
    .dock { width: 2747px; height: 137px; border-radius: 42px; position: relative; display: flex; padding: 20px 0 0 20px; border: 2px solid rgba(255,255,255,.2); box-shadow: 0 0 0 1px rgba(0,0,0,.5), 0 -2px 90px rgba(0,0,0,.27);
      background: linear-gradient(90deg, #34454d 0, #2f4c56 160px, #2d4f5a 600px, #30555e 1000px, #2e5058 1300px, #2a4b58 1440px, #2f545b 1640px, #2d5058 1850px, #2a4650 1980px, #27343b 2070px, #252a2a 2150px, #252827 2400px, #202329 2600px, #1c1e27 2747px); }
    .dock::after { content: ""; position: absolute; inset: 0; border-radius: 40px; background: linear-gradient(rgba(0,0,0,.06), rgba(90,140,150,.12)); pointer-events: none; }
    .apps { display: flex; gap: 28.530px; z-index: 1; }
    .apps.main { margin-left: -3px; }
    .appi { width: 86px; height: 112px; display: flex; flex-direction: column; justify-content: space-between; align-items: center; position: relative; margin-top: -2px; }
    .dot { width: 8px; height: 8px; border-radius: 4px; background: #b3d4dc; }
    .gdot .dot { background: #a5a7a8; }
    .badge { position: absolute; width: 41px; height: 41px; border-radius: 21px; background: #e2503f; right: -13px; top: -11px; color: #fff; display: grid; place-items: center; font-size: 23px; box-shadow: 0 1px 3px rgba(0,0,0,.3); }
    .dsep { width: 2px; height: 100px; background: #62696b; margin: -4px 38px 0 39px; z-index: 1; }
    .z { z-index: 1; }
    .file { margin: -10px 43px 0 9px; }
    .trash { margin-top: -10px; }
  `;

  private dockItem([art, run, badge]: [SVGTemplateResult, boolean, boolean]) {
    return html`<div class="appi">${icon(86, 86, art)}${run ? html`<span class="dot"></span>` : ""}${badge ? html`<span class="badge">1</span>` : ""}</div>`;
  }

  private menubar() {
    return html`<div class="menubar">
      ${icon(31, 31, svg`<path d=${APPLE} fill="#fff"/>`, "0 0 24 24", "glyph")}
      ${t("Chrome", 101, "app")}
      <div class="menus">${menus.map(([m, w]) => t(m, w))}</div>
      <div class="status glyph">
        ${icon(31, 31, svg`<path d=${OPENAI} fill="#fff"/>`, "0 0 24 24", "s1")}
        ${icon(29, 29, svg`<circle cx="14.500" cy="14.500" r="12.900" fill="none" stroke="#fff" stroke-width="2.600"/><path d="M10.800 8.500v12l9.700-6z" fill="#fff"/>`, "0 0 29 29", "s2")}
        ${icon(39, 26, svg`<g fill="#fff"><ellipse cx="6.500" cy="11" rx="6" ry="5.500" opacity=".55"/><ellipse cx="32.500" cy="11" rx="6" ry="5.500" opacity=".55"/><path d="M6 5Q9 0 14 1q4 1 4 6 0 6-4 7.500V26H9.500V13Q5 10 6 5zM33 5Q30 0 25 1q-4 1-4 6 0 6 4 7.500V26h4.500V13Q34 10 33 5z"/></g>`, "0 0 39 26", "s3")}
        ${icon(35, 26, svg`<g fill="none" stroke="#fff" stroke-width="4.600"><path d="M1.500 9.500a23 23 0 0 1 32 0M7.500 16a14.500 14.500 0 0 1 20 0"/></g><path d="M17.500 25.500l-5.500-5.700a8 8 0 0 1 11 0z" fill="#fff"/>`, "0 0 35 26", "s4")}
        ${icon(50, 26, svg`<rect x="1" y="1.500" width="45" height="23" rx="7" fill="none" stroke="#fff" stroke-opacity=".5" stroke-width="2"/><path d="M48 9.500q2.500 3.500 0 7z" fill="#fff" opacity=".5"/><rect x="4" y="4.500" width="9.500" height="17" rx="3.500" fill="#fff"/><path d="M27 0L14 14.500h8L19 26 33 11h-8.500L28 0z" fill="#fff" stroke="#8794bb" stroke-width="1.500"/>`, "0 0 50 26", "s5")}
        ${icon(26, 26, svg`<circle cx="10.500" cy="10.500" r="9" fill="none" stroke="#fff" stroke-width="2.700"/><path d="M17 17l7.500 7.500" stroke="#fff" stroke-width="3.400" stroke-linecap="round"/>`, "0 0 26 26", "s6")}
        ${icon(27, 28, svg`<rect x="1.300" y="1.300" width="24.400" height="10.400" rx="5.200" fill="none" stroke="#fff" stroke-width="2.600"/><circle cx="7" cy="6.500" r="3.200" fill="#fff"/><rect y="15" width="27" height="13" rx="6.500" fill="#fff"/><circle cx="20" cy="21.500" r="3.700" fill="#8996bc"/>`)}
        <div class="clock">${t("Mon Mar 3", 128)}${t("2:12 PM", 98)}</div>
      </div>
    </div>`;
  }

  private chromeBars() {
    const c = "#c3d2da";
    return html`
      <div class="tabs">
        <div class="lights"><i class="red"></i><i class="yel"></i><i class="grn"></i></div>
        <div class="tab active"><span class="fav"><b>{</b>ik<b>}</b></span><div class="title">${t("Case Study - 1 : Before you Be", 341)}</div>${closeX("#e5e8ea")}</div>
        <div class="tab second"><span class="fav"><b>{</b>ik<b>}</b></span><div class="title">${t("Case Study - I Live Class with", 336)}</div>${closeX(c)}</div>
        <div class="tsep"></div>
        ${icon(21, 21, svg`<path d="M10.500 0v21M0 10.500h21" stroke=${c} stroke-width="2.800"/>`, "0 0 21 21", "plus")}
        <div class="grow"></div>
        <div class="tabsearch">${icon(17, 11, svg`<path d="M1.500 1.500l7 7 7-7" fill="none" stroke="#e5e8ea" stroke-width="3"/>`)}</div>
      </div>
      <div class="toolbar">
        ${icon(25, 23, svg`<path d="M25 11.500H2.500M12.500 1L2 11.500 12.500 22" fill="none" stroke=${c} stroke-width="2.700"/>`, "0 0 25 23", "back")}
        ${icon(25, 23, svg`<path d="M0 11.500H22.500M12.500 1L23 11.500 12.500 22" fill="none" stroke="#74818a" stroke-width="2.700"/>`, "0 0 25 23", "fwd")}
        ${icon(24, 24, svg`<path d="M21.500 15.500A10.200 10.200 0 1 1 20.500 6.500L22 9" fill="none" stroke=${c} stroke-width="2.800"/><path d="M22.500 0v9.500H13" fill="none" stroke=${c} stroke-width="2.800"/>`, "0 0 24 24", "rel")}
        <div class="omni">
          <div class="site">${icon(24, 23, svg`<g fill="none" stroke="#e3e6e8" stroke-width="2.700"><circle cx="4.500" cy="4.800" r="3.300"/><path d="M12 4.800h12M0 18.200h12"/><circle cx="19.500" cy="18.200" r="3.300"/></g>`)}</div>
          ${t("uplevel.interviewkickstart.com", 400, "host")}${t("/resource/rc-instruction-1037794-2059276-3244-19505", 753)}
          <div class="grow"></div>
          ${icon(28, 28, svg`<circle cx="10.500" cy="10.500" r="8.800" fill="none" stroke="#c7c7c7" stroke-width="2.700"/><path d="M17 17l10 10M6.500 10.500h8" stroke="#c7c7c7" stroke-width="2.800"/>`, "0 0 28 28", "zo")}
          ${icon(30, 29, svg`<path d="M15 3.500l3.300 7.700 8.400.8-6.300 5.500 1.900 8.200L15 21.400l-7.300 4.300 1.900-8.200L3.300 12l8.400-.8z" fill="none" stroke="#c7c7c7" stroke-width="2.600"/>`)}
        </div>
        ${icon(33, 32, svg`<path d="M2 6h9q-1-5 4-5t4 5h8q1.500 0 1.500 1.500V14q4 .5 4 4t-4 4v7q0 1.500-1.500 1.500H3.500Q2 30.500 2 29v-6.500q4.500-1 4.500-4.500T2 13.500z" fill="none" stroke=${c} stroke-width="2.900"/>`, "0 0 33 32", "puz")}
        <div class="vsep"></div>
        ${icon(32, 32, svg`<path d="M16 0v21M7 13l9 9 9-9M1.500 22v7q0 1.500 1.500 1.500h26q1.500 0 1.500-1.500v-7" fill="none" stroke=${c} stroke-width="3"/>`, "0 0 32 32", "dl")}
        ${icon(40, 40, svg`<circle cx="20" cy="20" r="20" fill="#56bdd5"/><path d="M16 13q1-4 6-4l6-2-4 3 5 0-6 3q-1 3 0 4 5 4 4 10l2 4q-5 2-12 1l-2-3 3-5-4-3-3-2 4-2z" fill="#f09a9e"/><path d="M14 19l7-2 1 2-6 3z" fill="#a5505a"/>`, "0 0 40 40", "av")}
        ${icon(6, 28, svg`<circle cx="3" cy="3" r="2.900" fill=${c}/><circle cx="3" cy="14" r="2.900" fill=${c}/><circle cx="3" cy="25" r="2.900" fill=${c}/>`)}
      </div>
      <div class="bookmarks">
        ${icon(28, 28, svg`<g fill="none" stroke="#d0d0d0" stroke-width="2.800"><rect x="1.400" y="1.400" width="9" height="9"/><rect x="17.400" y="1.400" width="9" height="9"/><rect x="1.400" y="17.400" width="9" height="9"/><rect x="17.400" y="17.400" width="9" height="9"/></g>`)}
        <div class="vsep"></div>
        <div class="bmgrid">${bookmarks.map(([ic, label, w]) => html`<div class="bm ${ic === folder ? "f" : ""}">${ic}${t(label, w)}</div>`)}</div>
        ${icon(21, 17, svg`<path d="M1.500 1l7.500 7.500L1.500 16M11 1l7.500 7.500L11 16" fill="none" stroke="#c7c7c7" stroke-width="2.600"/>`)}
        <div class="vsep vs2"></div>
        <div class="bm f">${folder}${t("All Bookmarks", 160)}</div>
      </div>
      <div class="line2"></div>`;
  }

  private nav() {
    return html`<div class="nav">
      ${t("{ik}", 35, "logo")}<div class="upwrap">${t("UPLEVEL", 75, "uplevel")}${icon(8, 9, svg`<path d="M4 0l3.500 4H5.200v5H2.800V4H.5z" fill="#fff"/>`, "0 0 8 9", "arrow")}</div><span class="beta">${t("BETA", 22)}</span>
      <div class="links">${navLinks.map(([l, w, d]) => html`<span class="link ${d ? "drop" : ""}">${t(l, w)}${d ? icon(8, 6, svg`<path d="M.5 .5L4 5 7.500 .5" fill="none" stroke="#7485a6" stroke-width="1.100"/>`) : ""}</span>`)}</div>
      <div class="search">${icon(16, 16, svg`<circle cx="7" cy="7" r="6" fill="none" stroke="#fff" stroke-width="1.400"/><path d="M11.500 11.500L15 15" stroke="#fff" stroke-width="1.500"/>`)}${t("Smart search", 83)}</div>
      <div class="toggle"><i></i></div>
      <div class="support">${icon(13, 13, svg`<path d="M1.500 8V6a5 5 0 0 1 10 0v4q0 2-3 2.300" fill="none" stroke="#fff" stroke-width="1.300"/><rect x="2.800" y="5.500" width="2" height="4" fill="#fff"/><rect x="8.200" y="5.500" width="2" height="4" fill="#fff"/>`)}${t("Get Support", 72)}</div>
      <div class="user">P</div>
    </div>`;
  }

  private doc() {
    return html`<div class="doc">
      <h1 class="intro">${t("Introduction", 201)}</h1>
      <div class="p1">
        ${t("Hello everyone,", 97)}<div class="blank"></div>
        ${t("Congratulations on completing an extensive and comprehensive journey through various machine learning concepts.", 727)}
        ${t("This project is designed to help you consolidate and apply these diverse skills in a practical, real-world scenario. By working through this project, you will not only reinforce", 1067)}
        ${t("your theoretical understanding but also gain invaluable hands-on experience. This is an opportunity to see how these algorithms and techniques interact, complement each", 1073)}
        ${t("other, and can be effectively deployed to solve complex problems.", 413)}
        ${t("We encourage you to approach this project with curiosity and creativity. Utilize all the tools and knowledge you've acquired, and don't hesitate to experiment with different", 1065)}
        ${t("methods and techniques. This is your chance to bring together everything you've learned and see the full picture of data science and machine learning in action.", 998)}
      </div>
      <h1>${t("Project Overview", 272)}</h1>
      ${t("You are provided with 1 projects to work on this week:", 338)}<div class="blank"></div>
      <div class="mix">${t("Lending Club Loan Approval:", 185, "bold")}${t("Implement a machine learning solution that automates the loan approval process, improving accuracy and efficiency.", 731)}</div><div class="blank"></div>
      ${t("Project Summary", 112, "bold")}
      <div class="t1">${project.map(([h, a, b], i) => html`<div class="row ${i ? "" : "head"}" style="height:${i ? h : h - 1}px"><div class="c1">${a.map(([s, w]) => t(s, w))}</div><div class="c2">${b.map(([s, w]) => t(s, w))}</div></div>`)}</div>
      <div class="rig bold">${t("Rigor Summary", 99.5)}</div>
      <div class="t2">${rigor.map(([h, a, b, k], i) => html`<div class="row ${k}" style="height:${i ? h : h - 1}px"><div class="c1"><div>${a.map(([s, w]) => t(s, w))}</div></div><div class="c2">${b.map((p) => html`<div>${p.map(([s, w]) => t(s, w))}</div>`)}</div></div>`)}</div>
    </div>`;
  }

  private side() {
    return html`<div class="side">
      <div class="shead"><div class="st">${t("Case Study - 1", 92)}</div><div class="ss">${t("5 Resources / 5 Total Resources", 172)}</div></div>
      <div class="list">${resources.map(([a, b], i) => html`<div class="res ${i ? "" : "on"}">
        <div class="rbox">${icon(14, 14, svg`<circle cx="7" cy="7" r="6.300" fill="none" stroke="#4fb662" stroke-width="1.200"/><path d="M7 6.300v4M7 3.500v1.400" stroke="#4fb662" stroke-width="1.300"/>`)}</div>
        <div class="rt">${t(a[0], a[1])}${t(b[0], b[1])}<div class="ins">${t("Instruction", 59)}</div></div>
        <div class="ok">${icon(10, 8, svg`<path d="M1 4.200l2.800 2.600L9.200 1" fill="none" stroke="#4cb05f" stroke-width="2"/>`)}</div>
      </div>`)}</div>
      <div class="pager"><div class="pb off">${icon(5, 8, svg`<path d="M4 .5L1 4l3 3.500" fill="none" stroke="#8f98a8" stroke-width="1.400"/>`)}</div>${t("1 of 5", 35)}<div class="pb">${icon(5, 8, svg`<path d="M1 .5L4 4 1 7.500" fill="none" stroke="#4a5670" stroke-width="1.400"/>`)}</div></div>
    </div>`;
  }

  render() {
    return html`<div class="screen">
      <svg class="defs"><defs>
        ${grad("gFinL", "#5ec6fb", "#3468ee")}${grad("gFinR", "#e4e7ec", "#dbe2ee")}${grad("gWhite", "#ffffff", "#dcdcdc")}${grad("gSaf", "#4fa8ef", "#3569dd")}
        ${grad("gGpt", "#ffffff", "#e1e8f5")}${grad("gGreen", "#86ee7e", "#55bf49")}${grad("gBub", "#ffffff", "#cfe6c6")}${grad("gSet", "#d8e0e6", "#8f8c8a")}${grad("gNote", "#fbe072", "#f5c63c")}
        ${grad("gApp", "#52b0ee", "#2a5bdb")}${grad("gDis", "#7480f0", "#565df0")}${grad("gTerm", "#d3e4ec", "#777474")}${grad("gZoom", "#2d5bf5", "#1b48ce")}${grad("gSky", "#8fb2e8", "#bcd0f0")}
        <linearGradient id="gPy" x1=".1" y1=".6" x2=".95" y2=".25"><stop offset=".15" stop-color="#55c2ee"/><stop offset=".5" stop-color="#62c9a0"/><stop offset=".8" stop-color="#e8ea52"/><stop offset="1" stop-color="#f5ee4f"/></linearGradient>
        <linearGradient id="gTr" x1="0" x2="1" y1="0" y2="0"><stop offset="0" stop-color="#6d7072"/><stop offset=".15" stop-color="#7c7f81"/><stop offset=".55" stop-color="#5c5f61"/><stop offset=".88" stop-color="#77797b"/><stop offset="1" stop-color="#8d8f91"/></linearGradient>
      </defs></svg>
      ${this.menubar()}
      <div class="desk">
        <div class="window">
          ${this.chromeBars()}${this.nav()}
          <div class="body"><div class="canvas">${this.doc()}</div>${this.side()}</div>
          <div class="rim"></div>
        </div>
        <div class="dockarea"><div class="dock">
          <div class="apps main">${dock.map((d) => this.dockItem(d))}</div>
          <div class="dsep"></div>
          <div class="apps gdot">${dock2.map((d) => this.dockItem(d))}</div>
          <div class="dsep"></div>
          ${icon(69, 100, svg`<rect x="0" y="11" width="8" height="89" fill="#3c3c3c"/><path d="M7 3l5-3H61q1.500 0 1.500 1.500V20H7z" fill="#dedede"/><path d="M22 3h20M26 5.500h14" stroke="#999" stroke-width="1.300"/><path d="M6 7q0-1 1-1h5v5H67q2 0 2 2V98q0 2-2 2H6z" fill="#f4f4f4"/><path d="M19 15h3l4 6v-6h2v9h-3l-4-6v6h-2z" fill="#166c4d"/><rect x="30" y="17" width="15" height="2" fill="#555"/><path d="M30 22h15" stroke="#bbb"/><path d="M20 27h24M24 30h14" stroke="#aaa"/>${range(20).map((i) => svg`<path d="M${i > 9 ? 11 : 7} ${40 + i * 2.300}h${i % 6 === 2 ? 24 : i > 9 ? 50 : 56}" stroke="#a0a0a0" stroke-width=".9"/>`)}<path d="M7 91h18M54 91h6" stroke="#aaa" stroke-width=".9"/><path d="M45 3q1 16 0 31l23 .5Q52 20 46 3z" fill="#fbfbfb" stroke="#d5d5d5"/>`, "0 0 69 100", "z file")}
          ${icon(76, 98, svg`<path d="M.5 13L9 87q2 11 29 11t29-11L75.500 13z" fill="url(#gTr)"/><path d="M14 34Q24 60 20 88M62 28Q52 60 56 88" stroke="#9a9da0" stroke-opacity=".22" stroke-width="8" fill="none"/><path d="M.5 13Q38 32 75.500 13 74 8 64 7H12Q2 8 .5 13z" fill="#7f8284"/><path d="M6 8l5-2 6-4 9-2 8 4 5-2 6 1 8 3 8 2 6 4 2 6-9 3-12 1-10 0-11-1-13-3-4-5z" fill="#e3e6e8"/><path d="M10 12l12-7 8 4-13 8M34 4l6 14 8-12M58 6l8 4-6 8" stroke="#7f8184" stroke-width="1.300" fill="none"/><path d="M16 17l10-4 6 5-6 4z" fill="#4a3c3c"/><path d="M24 11l8-2 5 3-6 4z" fill="#58b98a"/><path d="M28 9l5 0 2 3-4 1z" fill="#3fb2e0"/><path d="M43 9l6-2 8 8-7 3-9-1z" fill="#454a7c"/><path d="M44 15l7-2 3 4-8 2z" fill="#c8622f"/>`, "0 0 76 98", "z trash")}
        </div></div>
      </div>
    </div>`;
  }
}
